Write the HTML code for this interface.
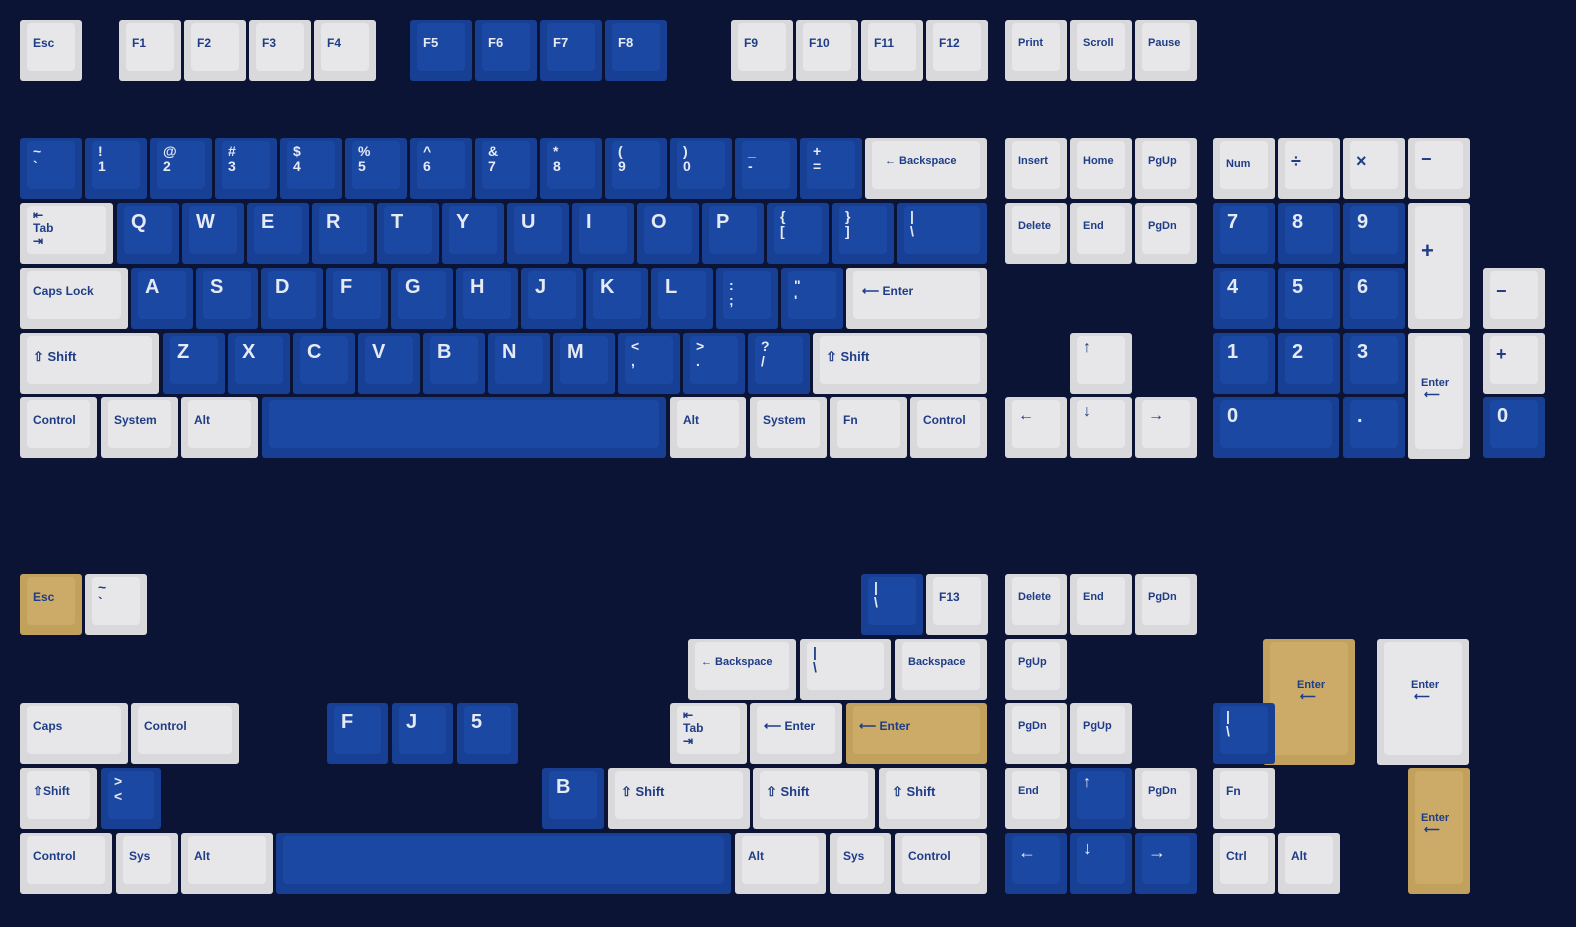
<!DOCTYPE html><html><head><meta charset="utf-8"><style>
body{margin:0;width:1576px;height:927px;background:#0b1434;overflow:hidden;font-family:"Liberation Sans",sans-serif;position:relative}
.k{position:absolute;height:61px;border-radius:3px;box-sizing:border-box}
.k::before{content:"";position:absolute;left:7px;right:7px;top:3px;bottom:10px;border-radius:4px}
.w{background:#d9d9dc}.w::before{background:#e7e7e9}
.b{background:#173f93}.b::before{background:#1b48a3}
.g{background:#c1a15c}.g::before{background:#cbab67}
.k span{position:absolute;left:13px;top:17px;font-weight:bold;font-size:12px;color:#1f3d86;line-height:1.1;white-space:pre}
.b span{color:#e6eaf4;font-size:14px;top:6px}
.b span.a{font-size:20px;top:8px;left:14px}
</style></head><body>
<!-- row0 -->
<div class="k w" style="left:20px;top:20px;width:62px"><span>Esc</span></div>
<div class="k w" style="left:119px;top:20px;width:62px"><span>F1</span></div>
<div class="k w" style="left:184px;top:20px;width:62px"><span>F2</span></div>
<div class="k w" style="left:249px;top:20px;width:62px"><span>F3</span></div>
<div class="k w" style="left:314px;top:20px;width:62px"><span>F4</span></div>
<div class="k b" style="left:410px;top:20px;width:62px"><span style="font-size:13px;top:16px">F5</span></div>
<div class="k b" style="left:475px;top:20px;width:62px"><span style="font-size:13px;top:16px">F6</span></div>
<div class="k b" style="left:540px;top:20px;width:62px"><span style="font-size:13px;top:16px">F7</span></div>
<div class="k b" style="left:605px;top:20px;width:62px"><span style="font-size:13px;top:16px">F8</span></div>
<div class="k w" style="left:731px;top:20px;width:62px"><span>F9</span></div>
<div class="k w" style="left:796px;top:20px;width:62px"><span>F10</span></div>
<div class="k w" style="left:861px;top:20px;width:62px"><span>F11</span></div>
<div class="k w" style="left:926px;top:20px;width:62px"><span>F12</span></div>
<div class="k w" style="left:1005px;top:20px;width:62px"><span style="font-size:11px">Print</span></div>
<div class="k w" style="left:1070px;top:20px;width:62px"><span style="font-size:11px">Scroll</span></div>
<div class="k w" style="left:1135px;top:20px;width:62px"><span style="font-size:11px">Pause</span></div>
<!-- row1 -->
<div class="k b" style="left:20px;top:138px;width:62px"><span>~
`</span></div>
<div class="k b" style="left:85px;top:138px;width:62px"><span>!
1</span></div>
<div class="k b" style="left:150px;top:138px;width:62px"><span>@
2</span></div>
<div class="k b" style="left:215px;top:138px;width:62px"><span>#
3</span></div>
<div class="k b" style="left:280px;top:138px;width:62px"><span>$
4</span></div>
<div class="k b" style="left:345px;top:138px;width:62px"><span>%
5</span></div>
<div class="k b" style="left:410px;top:138px;width:62px"><span>^
6</span></div>
<div class="k b" style="left:475px;top:138px;width:62px"><span>&amp;
7</span></div>
<div class="k b" style="left:540px;top:138px;width:62px"><span>*
8</span></div>
<div class="k b" style="left:605px;top:138px;width:62px"><span>(
9</span></div>
<div class="k b" style="left:670px;top:138px;width:62px"><span>)
0</span></div>
<div class="k b" style="left:735px;top:138px;width:62px"><span>_
-</span></div>
<div class="k b" style="left:800px;top:138px;width:62px"><span>+
=</span></div>
<div class="k w" style="left:865px;top:138px;width:122px"><span style="left:20px;font-size:11px">← Backspace</span></div>
<div class="k w" style="left:1005px;top:138px;width:62px"><span style="font-size:11px">Insert</span></div>
<div class="k w" style="left:1070px;top:138px;width:62px"><span style="font-size:11px">Home</span></div>
<div class="k w" style="left:1135px;top:138px;width:62px"><span style="font-size:11px">PgUp</span></div>
<div class="k w" style="left:1213px;top:138px;width:62px"><span style="font-size:11px;top:20px">Num</span></div>
<div class="k w" style="left:1278px;top:138px;width:62px"><span style="font-size:18px;top:14px">÷</span></div>
<div class="k w" style="left:1343px;top:138px;width:62px"><span style="font-size:18px;top:14px">×</span></div>
<div class="k w" style="left:1408px;top:138px;width:62px"><span style="font-size:18px;top:12px">−</span></div>
<!-- row2 -->
<div class="k w" style="left:20px;top:203px;width:93px"><span style="top:6px">⇤
Tab
⇥</span></div>
<div class="k b" style="left:117px;top:203px;width:62px"><span class="a">Q</span></div>
<div class="k b" style="left:182px;top:203px;width:62px"><span class="a">W</span></div>
<div class="k b" style="left:247px;top:203px;width:62px"><span class="a">E</span></div>
<div class="k b" style="left:312px;top:203px;width:62px"><span class="a">R</span></div>
<div class="k b" style="left:377px;top:203px;width:62px"><span class="a">T</span></div>
<div class="k b" style="left:442px;top:203px;width:62px"><span class="a">Y</span></div>
<div class="k b" style="left:507px;top:203px;width:62px"><span class="a">U</span></div>
<div class="k b" style="left:572px;top:203px;width:62px"><span class="a">I</span></div>
<div class="k b" style="left:637px;top:203px;width:62px"><span class="a">O</span></div>
<div class="k b" style="left:702px;top:203px;width:62px"><span class="a">P</span></div>
<div class="k b" style="left:767px;top:203px;width:62px"><span>{
[</span></div>
<div class="k b" style="left:832px;top:203px;width:62px"><span>}
]</span></div>
<div class="k b" style="left:897px;top:203px;width:90px"><span>|
\</span></div>
<div class="k w" style="left:1005px;top:203px;width:62px"><span style="font-size:11px">Delete</span></div>
<div class="k w" style="left:1070px;top:203px;width:62px"><span style="font-size:11px">End</span></div>
<div class="k w" style="left:1135px;top:203px;width:62px"><span style="font-size:11px">PgDn</span></div>
<div class="k b" style="left:1213px;top:203px;width:62px"><span class="a">7</span></div>
<div class="k b" style="left:1278px;top:203px;width:62px"><span class="a">8</span></div>
<div class="k b" style="left:1343px;top:203px;width:62px"><span class="a">9</span></div>
<div class="k w" style="left:1408px;top:203px;width:62px;height:126px"><span style="font-size:22px;top:36px">+</span></div>
<!-- row3 -->
<div class="k w" style="left:20px;top:268px;width:108px"><span>Caps Lock</span></div>
<div class="k b" style="left:131px;top:268px;width:62px"><span class="a">A</span></div>
<div class="k b" style="left:196px;top:268px;width:62px"><span class="a">S</span></div>
<div class="k b" style="left:261px;top:268px;width:62px"><span class="a">D</span></div>
<div class="k b" style="left:326px;top:268px;width:62px"><span class="a">F</span></div>
<div class="k b" style="left:391px;top:268px;width:62px"><span class="a">G</span></div>
<div class="k b" style="left:456px;top:268px;width:62px"><span class="a">H</span></div>
<div class="k b" style="left:521px;top:268px;width:62px"><span class="a">J</span></div>
<div class="k b" style="left:586px;top:268px;width:62px"><span class="a">K</span></div>
<div class="k b" style="left:651px;top:268px;width:62px"><span class="a">L</span></div>
<div class="k b" style="left:716px;top:268px;width:62px"><span style="top:10px">:
;</span></div>
<div class="k b" style="left:781px;top:268px;width:62px"><span style="top:10px">"
'</span></div>
<div class="k w" style="left:846px;top:268px;width:141px"><span style="left:16px">⟵ Enter</span></div>
<div class="k b" style="left:1213px;top:268px;width:62px"><span class="a">4</span></div>
<div class="k b" style="left:1278px;top:268px;width:62px"><span class="a">5</span></div>
<div class="k b" style="left:1343px;top:268px;width:62px"><span class="a">6</span></div>
<div class="k w" style="left:1483px;top:268px;width:62px"><span style="font-size:18px;top:14px">−</span></div>
<!-- row4 -->
<div class="k w" style="left:20px;top:333px;width:139px"><span style="font-size:13px">⇧ Shift</span></div>
<div class="k b" style="left:163px;top:333px;width:62px"><span class="a">Z</span></div>
<div class="k b" style="left:228px;top:333px;width:62px"><span class="a">X</span></div>
<div class="k b" style="left:293px;top:333px;width:62px"><span class="a">C</span></div>
<div class="k b" style="left:358px;top:333px;width:62px"><span class="a">V</span></div>
<div class="k b" style="left:423px;top:333px;width:62px"><span class="a">B</span></div>
<div class="k b" style="left:488px;top:333px;width:62px"><span class="a">N</span></div>
<div class="k b" style="left:553px;top:333px;width:62px"><span class="a">M</span></div>
<div class="k b" style="left:618px;top:333px;width:62px"><span>&lt;
,</span></div>
<div class="k b" style="left:683px;top:333px;width:62px"><span>&gt;
.</span></div>
<div class="k b" style="left:748px;top:333px;width:62px"><span>?
/</span></div>
<div class="k w" style="left:813px;top:333px;width:174px"><span style="font-size:13px">⇧ Shift</span></div>
<div class="k w" style="left:1070px;top:333px;width:62px"><span style="font-size:16px;top:6px">↑</span></div>
<div class="k b" style="left:1213px;top:333px;width:62px"><span class="a">1</span></div>
<div class="k b" style="left:1278px;top:333px;width:62px"><span class="a">2</span></div>
<div class="k b" style="left:1343px;top:333px;width:62px"><span class="a">3</span></div>
<div class="k w" style="left:1408px;top:333px;width:62px;height:126px"><span style="font-size:11px;top:44px">Enter
 ⟵</span></div>
<div class="k w" style="left:1483px;top:333px;width:62px"><span style="font-size:18px;top:12px">+</span></div>
<!-- row5 -->
<div class="k w" style="left:20px;top:397px;width:77px"><span>Control</span></div>
<div class="k w" style="left:101px;top:397px;width:77px"><span>System</span></div>
<div class="k w" style="left:181px;top:397px;width:77px"><span>Alt</span></div>
<div class="k b" style="left:262px;top:397px;width:404px"></div>
<div class="k w" style="left:670px;top:397px;width:76px"><span>Alt</span></div>
<div class="k w" style="left:750px;top:397px;width:77px"><span>System</span></div>
<div class="k w" style="left:830px;top:397px;width:77px"><span>Fn</span></div>
<div class="k w" style="left:910px;top:397px;width:77px"><span>Control</span></div>
<div class="k w" style="left:1005px;top:397px;width:62px"><span style="font-size:16px;top:10px">←</span></div>
<div class="k w" style="left:1070px;top:397px;width:62px"><span style="font-size:16px;top:6px">↓</span></div>
<div class="k w" style="left:1135px;top:397px;width:62px"><span style="font-size:16px;top:10px">→</span></div>
<div class="k b" style="left:1213px;top:397px;width:126px"><span class="a">0</span></div>
<div class="k b" style="left:1343px;top:397px;width:62px"><span class="a">.</span></div>
<div class="k b" style="left:1483px;top:397px;width:62px"><span class="a">0</span></div>
<!-- bottom A -->
<div class="k g" style="left:20px;top:574px;width:62px"><span>Esc</span></div>
<div class="k w" style="left:85px;top:574px;width:62px"><span style="top:6px;font-size:14px">~
`</span></div>
<div class="k b" style="left:861px;top:574px;width:62px"><span>|
\</span></div>
<div class="k w" style="left:926px;top:574px;width:62px"><span>F13</span></div>
<div class="k w" style="left:1005px;top:574px;width:62px"><span style="font-size:11px">Delete</span></div>
<div class="k w" style="left:1070px;top:574px;width:62px"><span style="font-size:11px">End</span></div>
<div class="k w" style="left:1135px;top:574px;width:62px"><span style="font-size:11px">PgDn</span></div>
<!-- bottom B -->
<div class="k w" style="left:688px;top:639px;width:108px"><span style="font-size:11px">← Backspace</span></div>
<div class="k w" style="left:800px;top:639px;width:91px"><span style="top:6px;font-size:14px">|
\</span></div>
<div class="k w" style="left:895px;top:639px;width:92px"><span style="font-size:11px">Backspace</span></div>
<div class="k w" style="left:1005px;top:639px;width:62px"><span style="font-size:11px">PgUp</span></div>
<div class="k g" style="left:1263px;top:639px;width:92px;height:126px"><span style="font-size:11px;left:34px;top:40px">Enter
 ⟵</span></div>
<div class="k w" style="left:1377px;top:639px;width:92px;height:126px"><span style="font-size:11px;left:34px;top:40px">Enter
 ⟵</span></div>
<!-- bottom C -->
<div class="k w" style="left:20px;top:703px;width:108px"><span>Caps</span></div>
<div class="k w" style="left:131px;top:703px;width:108px"><span>Control</span></div>
<div class="k b" style="left:327px;top:703px;width:61px"><span class="a">F</span></div>
<div class="k b" style="left:392px;top:703px;width:61px"><span class="a">J</span></div>
<div class="k b" style="left:457px;top:703px;width:61px"><span class="a">5</span></div>
<div class="k w" style="left:670px;top:703px;width:77px"><span style="top:6px">⇤
Tab
⇥</span></div>
<div class="k w" style="left:750px;top:703px;width:92px"><span style="left:14px">⟵ Enter</span></div>
<div class="k g" style="left:846px;top:703px;width:141px"><span>⟵ Enter</span></div>
<div class="k w" style="left:1005px;top:703px;width:62px"><span style="font-size:11px">PgDn</span></div>
<div class="k w" style="left:1070px;top:703px;width:62px"><span style="font-size:11px">PgUp</span></div>
<div class="k b" style="left:1213px;top:703px;width:62px"><span>|
\</span></div>
<!-- bottom D -->
<div class="k w" style="left:20px;top:768px;width:77px"><span style="font-size:12px">⇧Shift</span></div>
<div class="k b" style="left:101px;top:768px;width:60px"><span>&gt;
&lt;</span></div>
<div class="k b" style="left:542px;top:768px;width:62px"><span class="a">B</span></div>
<div class="k w" style="left:608px;top:768px;width:142px"><span style="font-size:13px">⇧ Shift</span></div>
<div class="k w" style="left:753px;top:768px;width:122px"><span style="font-size:13px">⇧ Shift</span></div>
<div class="k w" style="left:879px;top:768px;width:108px"><span style="font-size:13px">⇧ Shift</span></div>
<div class="k w" style="left:1005px;top:768px;width:62px"><span style="font-size:11px">End</span></div>
<div class="k b" style="left:1070px;top:768px;width:62px"><span style="font-size:16px">↑</span></div>
<div class="k w" style="left:1135px;top:768px;width:62px"><span style="font-size:11px">PgDn</span></div>
<div class="k w" style="left:1213px;top:768px;width:62px"><span>Fn</span></div>
<div class="k g" style="left:1408px;top:768px;width:62px;height:126px"><span style="font-size:11px;top:44px">Enter
 ⟵</span></div>
<!-- bottom E -->
<div class="k w" style="left:20px;top:833px;width:92px"><span>Control</span></div>
<div class="k w" style="left:116px;top:833px;width:62px"><span>Sys</span></div>
<div class="k w" style="left:181px;top:833px;width:92px"><span>Alt</span></div>
<div class="k b" style="left:276px;top:833px;width:455px"></div>
<div class="k w" style="left:735px;top:833px;width:91px"><span>Alt</span></div>
<div class="k w" style="left:830px;top:833px;width:61px"><span>Sys</span></div>
<div class="k w" style="left:895px;top:833px;width:92px"><span>Control</span></div>
<div class="k b" style="left:1005px;top:833px;width:62px"><span style="font-size:18px;top:10px">←</span></div>
<div class="k b" style="left:1070px;top:833px;width:62px"><span style="font-size:18px">↓</span></div>
<div class="k b" style="left:1135px;top:833px;width:62px"><span style="font-size:18px;top:10px">→</span></div>
<div class="k w" style="left:1213px;top:833px;width:62px"><span>Ctrl</span></div>
<div class="k w" style="left:1278px;top:833px;width:62px"><span>Alt</span></div>
</body></html>
